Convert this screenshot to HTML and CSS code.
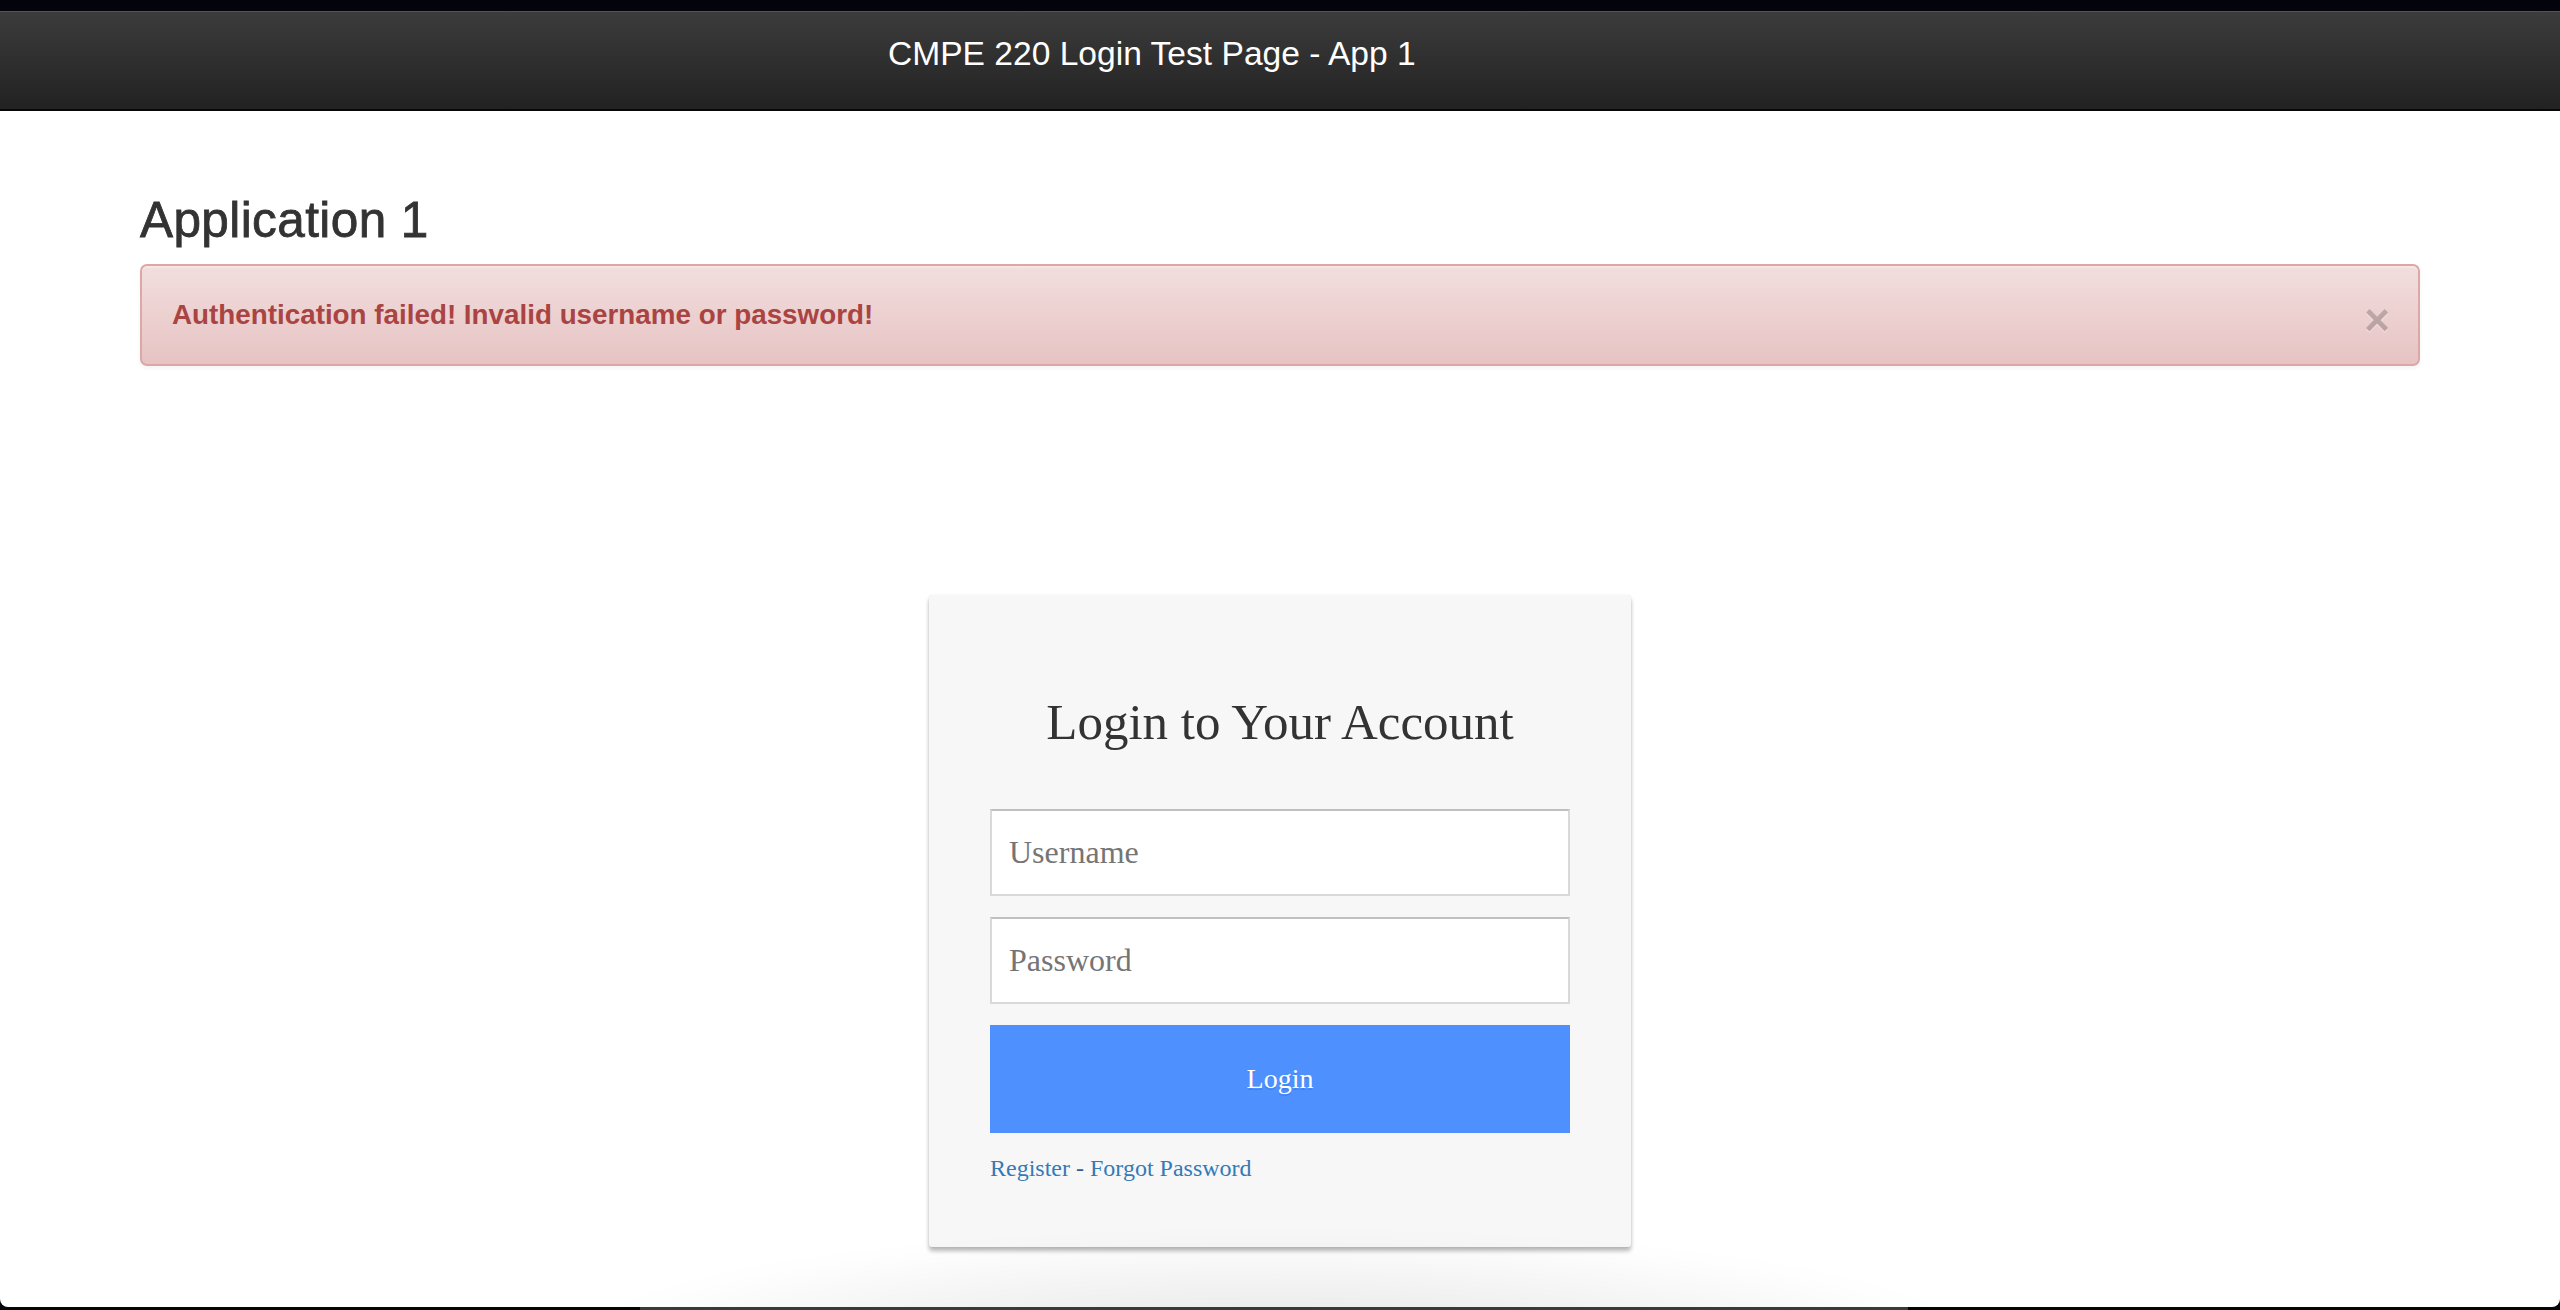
FILE: index.html
```html
<!DOCTYPE html>
<html lang="en">
<head>
<meta charset="utf-8">
<title>CMPE 220 Login Test Page - App 1</title>
<link rel="stylesheet" href="styles.css">
</head>
<body>
<div class="screen">
  <div class="topstrip"></div>
  <div class="window">
    <header class="navbar">
      <span class="brand">CMPE 220 Login Test Page - App 1</span>
    </header>
    <main class="container">
      <h3 class="page-title">Application 1</h3>
      <div class="alert">
        <strong class="alert-text">Authentication failed! Invalid username or password!</strong>
        <span class="close">×</span>
      </div>
      <div class="login-wrap">
        <div class="login-card">
          <h1 class="login-title">Login to Your Account</h1>
          <form class="login-form">
            <input class="login-input" type="text" placeholder="Username">
            <input class="login-input" type="password" placeholder="Password">
            <button class="login-submit" type="button">Login</button>
          </form>
          <div class="login-help"><a href="#">Register</a> <span class="sep">-</span> <a href="#">Forgot Password</a></div>
        </div>
      </div>
    </main>
    <div class="dock-shadow"></div>
  </div>
  <div class="bottomstrip"><div class="dock-edge"></div></div>
</div>
</body>
</html>
```

FILE: styles.css
```css
* { box-sizing: border-box; }

html, body {
  margin: 0;
  padding: 0;
  height: 1310px;
  overflow: hidden;
  background: #02030a;
}

.screen {
  display: flex;
  flex-direction: column;
  height: 1310px;
}

.topstrip {
  height: 11px;
  flex: none;
  background: #03040b;
}

.window {
  position: relative;
  flex: 1;
  background: #ffffff;
  border-radius: 0 0 8px 8px;
  overflow: hidden;
}

.bottomstrip {
  height: 3px;
  flex: none;
  background: #050505;
  display: flex;
  justify-content: center;
}

.dock-edge {
  margin-left: -13px;
  width: 1268px;
  height: 3px;
  background: #3a3a3a;
}

.navbar {
  height: 100px;
  background: linear-gradient(to bottom, #3c3c3c 0%, #222222 100%);
  border-bottom: 2px solid #080808;
  box-shadow: inset 0 1px 0 rgba(255, 255, 255, 0.12);
  padding: 23px 0 0 888px;
}

.brand {
  display: block;
  font-family: "Liberation Sans", Arial, sans-serif;
  font-size: 33.6px;
  line-height: 40px;
  color: #ffffff;
}

.container {
  padding: 0 140px;
}

.page-title {
  margin: 83px 0 0 0;
  font-family: "Liberation Sans", Arial, sans-serif;
  font-size: 49.5px;
  font-weight: 400;
  line-height: 52px;
  letter-spacing: 0.4px;
  color: #333333;
  -webkit-text-stroke: 0.8px #333333;
}

.alert {
  margin-top: 18px;
  height: 102px;
  display: flex;
  align-items: center;
  justify-content: space-between;
  padding: 0 28px 0 30px;
  border: 2px solid #dca7a7;
  border-radius: 7px;
  background: linear-gradient(to bottom, #f2dede 0%, #e7c3c3 100%);
  box-shadow: inset 0 2px 0 rgba(255, 255, 255, 0.25), 0 2px 4px rgba(0, 0, 0, 0.05);
}

.alert-text {
  font-family: "Liberation Sans", Arial, sans-serif;
  font-size: 27.8px;
  font-weight: 700;
  color: #a94442;
  line-height: 40px;
}

.close {
  margin-top: 10px;
  font-family: "Liberation Sans", Arial, sans-serif;
  font-size: 44px;
  font-weight: 700;
  line-height: 1;
  color: #000000;
  opacity: 0.2;
  text-shadow: 0 2px 0 #ffffff;
}

.login-wrap {
  display: flex;
  justify-content: center;
  margin-top: 229px;
}

.login-card {
  width: 702px;
  padding: 97px 61px 64px 61px;
  background: #f7f7f7;
  border-radius: 3px;
  box-shadow: 0 4px 4px rgba(0, 0, 0, 0.28), 0 0 2px rgba(0, 0, 0, 0.08);
  font-family: "Liberation Serif", "Times New Roman", serif;
}

.login-title {
  margin: 0 0 57px 0;
  font-family: "Liberation Serif", "Times New Roman", serif;
  font-size: 51px;
  font-weight: 400;
  line-height: 60px;
  text-align: center;
  color: #333333;
}

.login-form {
  display: flex;
  flex-direction: column;
  gap: 21px;
  margin: 0;
}

.login-input {
  display: block;
  width: 100%;
  height: 87px;
  margin: 0;
  padding: 0 17px;
  background: #ffffff;
  border: 2px solid #d9d9d9;
  border-top-color: #c0c0c0;
  border-radius: 0;
  font-family: "Liberation Serif", "Times New Roman", serif;
  font-size: 32px;
  color: #333333;
  outline: none;
}

.login-input::placeholder {
  color: #757575;
}

.login-submit {
  display: block;
  width: 100%;
  height: 108px;
  margin: 0;
  padding: 0;
  border: 0;
  border-radius: 0;
  background: #4d90fe;
  color: #ffffff;
  font-family: "Liberation Serif", "Times New Roman", serif;
  font-size: 28px;
  text-shadow: 0 2px rgba(0, 0, 0, 0.1);
  cursor: pointer;
}

.login-help {
  margin-top: 21px;
  font-size: 24px;
  line-height: 1.2;
  color: #333333;
}

.login-help a {
  color: #337ab7;
  text-decoration: none;
}

.login-help .sep {
  color: #2e5f8c;
}

.dock-shadow {
  position: absolute;
  left: 560px;
  width: 1430px;
  bottom: -40px;
  height: 190px;
  background: radial-gradient(ellipse 50% 60% at 50% 100%, rgba(0, 0, 0, 0.1) 0%, rgba(0, 0, 0, 0.05) 55%, rgba(0, 0, 0, 0) 100%);
  filter: blur(10px);
  pointer-events: none;
}
```
